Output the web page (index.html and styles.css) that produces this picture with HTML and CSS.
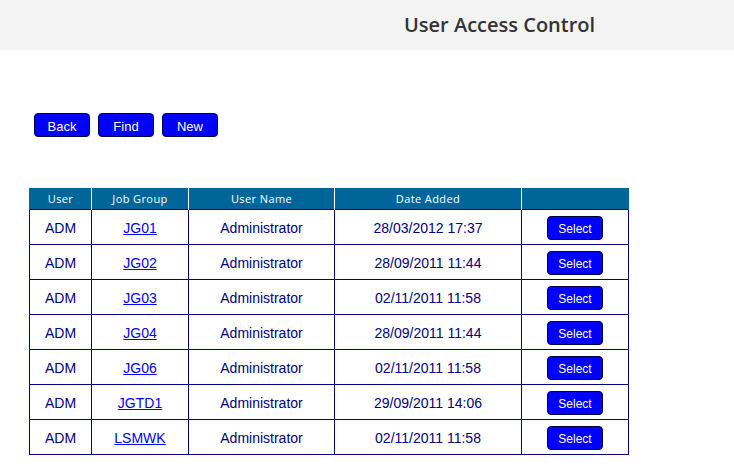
FILE: index.html
```html
<!DOCTYPE html>
<html>
  <head>
    <title>User Access Control</title>
    <link rel="stylesheet" href="styles.css">
  </head>
<body>
  <div class="topbar">
    <p class="title">User Access Control</p>
  </div>

  <div class="toolbar">
    <button class="navbutton">Back</button>
    <button class="navbutton">Find</button>
    <button class="navbutton">New</button>
  </div>

  <table class="usertable">
    <tr>
      <th class="col-user">User</th>
      <th class="col-group">Job Group</th>
      <th class="col-name">User Name</th>
      <th class="col-date">Date Added</th>
      <th class="col-action"></th>
    </tr>
    <tr>
      <td>ADM</td>
      <td><a href="#">JG01</a></td>
      <td>Administrator</td>
      <td>28/03/2012 17:37</td>
      <td><button class="selectbutton">Select</button></td>
    </tr>
    <tr>
      <td>ADM</td>
      <td><a href="#">JG02</a></td>
      <td>Administrator</td>
      <td>28/09/2011 11:44</td>
      <td><button class="selectbutton">Select</button></td>
    </tr>
    <tr>
      <td>ADM</td>
      <td><a href="#">JG03</a></td>
      <td>Administrator</td>
      <td>02/11/2011 11:58</td>
      <td><button class="selectbutton">Select</button></td>
    </tr>
    <tr>
      <td>ADM</td>
      <td><a href="#">JG04</a></td>
      <td>Administrator</td>
      <td>28/09/2011 11:44</td>
      <td><button class="selectbutton">Select</button></td>
    </tr>
    <tr>
      <td>ADM</td>
      <td><a href="#">JG06</a></td>
      <td>Administrator</td>
      <td>02/11/2011 11:58</td>
      <td><button class="selectbutton">Select</button></td>
    </tr>
    <tr>
      <td>ADM</td>
      <td><a href="#">JGTD1</a></td>
      <td>Administrator</td>
      <td>29/09/2011 14:06</td>
      <td><button class="selectbutton">Select</button></td>
    </tr>
    <tr>
      <td>ADM</td>
      <td><a href="#">LSMWK</a></td>
      <td>Administrator</td>
      <td>02/11/2011 11:58</td>
      <td><button class="selectbutton">Select</button></td>
    </tr>
  </table>
</body>
</html>
```

FILE: styles.css
```css
body{
  margin: 0;
  background-color: white;
  font-family: "Liberation Sans", Arial, sans-serif;
  color: #000080;
}
.topbar{
  background-color: #f3f3f3;
  height: 50px;
  display: flex;
  align-items: center;
}
.title{
  margin: 0 0 2px 404px;
  font-family: "Open Sans", sans-serif;
  font-size: 20px;
  font-weight: 600;
  color: #333333;
}
.toolbar{
  display: flex;
  gap: 8px;
  padding: 63px 0 0 34px;
}
.navbutton, .selectbutton{
  width: 56px;
  height: 24px;
  background-color: #0000ff;
  color: white;
  border: 1px solid #000040;
  border-radius: 4px;
  font-family: "Liberation Sans", Arial, sans-serif;
  font-size: 13px;
  padding: 3px 0 0;
  cursor: pointer;
}
.selectbutton{
  font-size: 12px;
  vertical-align: middle;
}
.usertable{
  margin: 51px 0 0 29px;
  border-collapse: collapse;
  width: 600px;
}
.usertable th{
  background-color: #006699;
  color: white;
  font-family: "Open Sans", sans-serif;
  font-size: 11px;
  font-weight: normal;
  letter-spacing: 0.4px;
  height: 21px;
  padding: 0;
  border-left: 1px solid white;
  border-right: 1px solid white;
}
.usertable th:first-child{
  border-left: 1px solid #006699;
}
.usertable th:last-child{
  border-right: 1px solid #006699;
}
.usertable td{
  border: 1px solid #000080;
  height: 33px;
  padding: 1px 0 0;
  text-align: center;
  font-size: 14px;
}
.usertable a{
  color: #0000ff;
}
.col-user{ width: 61px; }
.col-group{ width: 96px; }
.col-name{ width: 145px; }
.col-date{ width: 186px; }
```
